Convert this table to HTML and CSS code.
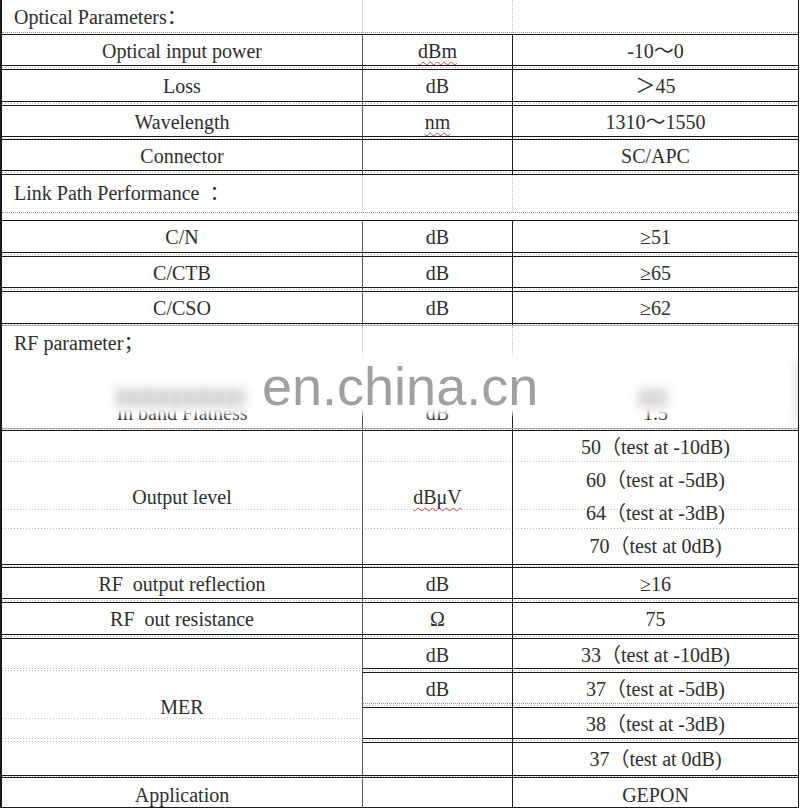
FILE: index.html
```html
<!DOCTYPE html>
<html lang="en">
<head>
<meta charset="utf-8">
<title>Parameters</title>
<link rel="stylesheet" href="styles.css">
</head>
<body>
<div class="sheet">
  <div class="sec s1"><div class="c1 lbl">Optical Parameters：</div><div class="c2"></div><div class="c3"></div></div>
  <div class="row"><div class="c1">Optical input power</div><div class="c2"><span class="sp">dBm</span></div><div class="c3">-10～0</div></div>
  <div class="gap"></div>
  <div class="row t"><div class="c1">Loss</div><div class="c2">dB</div><div class="c3">＞45</div></div>
  <div class="gap"></div>
  <div class="row"><div class="c1">Wavelength</div><div class="c2"><span class="sp">nm</span></div><div class="c3">1310～1550</div></div>
  <div class="gap g2"></div>
  <div class="row"><div class="c1">Connector</div><div class="c2"></div><div class="c3">SC/APC</div></div>
  <div class="gap"></div>
  <div class="sec s2"><div class="c1 lbl">Link Path Performance&nbsp; ：</div><div class="c2"></div><div class="c3"></div></div>
  <div class="row t"><div class="c1">C/N</div><div class="c2">dB</div><div class="c3">≥51</div></div>
  <div class="gap"></div>
  <div class="row"><div class="c1">C/CTB</div><div class="c2">dB</div><div class="c3">≥65</div></div>
  <div class="gap"></div>
  <div class="row t"><div class="c1">C/CSO</div><div class="c2">dB</div><div class="c3">≥62</div></div>
  <div class="gap g1"></div>
  <div class="sec s3"><div class="c1 lbl">RF parameter；</div><div class="c2"></div><div class="c3"></div></div>
  <div class="row inband"><div class="c1">In band Flatness</div><div class="c2">dB</div><div class="c3">1.5</div></div>
  <div class="gap g1"></div>
  <div class="row out">
    <div class="c1 mid">Output level</div>
    <div class="c2 mid"><span class="sp">dBμV</span></div>
    <div class="c3 stack">
      <div>50（test at -10dB)</div>
      <div>60（test at -5dB)</div>
      <div>64（test at -3dB)</div>
      <div>70（test at 0dB)</div>
    </div>
  </div>
  <div class="gap g2"></div>
  <div class="row"><div class="c1">RF&nbsp; output reflection</div><div class="c2">dB</div><div class="c3">≥16</div></div>
  <div class="gap"></div>
  <div class="row t"><div class="c1">RF&nbsp; out resistance</div><div class="c2">Ω</div><div class="c3">75</div></div>
  <div class="gap"></div>
  <div class="row mer">
    <div class="c1 mid">MER</div>
    <div class="subs">
      <div class="sub sa"><div class="c2">dB</div><div class="c3 big">33（test at -10dB)</div></div>
      <div class="sgap"></div>
      <div class="sub sb"><div class="c2">dB</div><div class="c3 big">37（test at -5dB)</div></div>
      <div class="sgap"></div>
      <div class="sub sc"><div class="c2"></div><div class="c3 big">38（test at -3dB)</div></div>
      <div class="sgap"></div>
      <div class="sub sd"><div class="c2"></div><div class="c3 big">37（test at 0dB)</div></div>
    </div>
  </div>
  <div class="gap g1"></div>
  <div class="row app"><div class="c1">Application</div><div class="c2"></div><div class="c3">GEPON</div></div>

  <div class="blur">
    <i class="sm sm1"></i>
    <i class="sm sm2"></i>
    <i class="sm sm3"></i>
  </div>
  <div class="wm">en.china.cn</div>
</div>
</body>
</html>
```
FILE: styles.css
```css
* { box-sizing: border-box; margin: 0; padding: 0; }
html, body { background: #fff; }
body {
  font-family: "Liberation Serif", "Noto Sans CJK SC", serif;
  font-size: 20px;
  color: #2e2e2e;
}

.sheet {
  position: relative;
  width: 799px;
  border-left: 2px solid #1a1a1a;
  border-right: 1px solid #1a1a1a;
  overflow: hidden;
}

.row, .sec {
  display: grid;
  grid-template-columns: 361px 150px 285px;
}

.row {
  height: 32px;
  border-top: 1px solid #1a1a1a;
  border-bottom: 1px solid #1a1a1a;
}
.row.t { height: 33px; }

.row > div {
  text-align: center;
  line-height: 30px;
  padding-top: 1px;
  white-space: nowrap;
}

.c1 { border-right: 1px solid #555; }
.c2 { border-right: 1px solid #1a1a1a; }

/* section header rows */
.sec .c1, .sec .c2 { border-right: 1px dotted #b5b5b5; }
.sec .lbl {
  text-align: left;
  padding-left: 12px;
  white-space: nowrap;
}
.s1 {
  height: 33px;
  border-bottom: 1px dotted #999;
  margin-bottom: 1px;
}
.s1 .lbl { line-height: 32px; padding-top: 1px; }
.s2 {
  height: 39px;
  border-top: 1px solid #1a1a1a;
  border-bottom: 1px dotted #999;
  margin-bottom: 7px;
}
.s2 .lbl { line-height: 37px; }
.s3 {
  height: 61px;
  border-top: 1px solid #b0b0b0;
}
.s3 .lbl { line-height: 32px; padding-top: 1px; }

/* gaps between bordered rows */
.gap {
  height: 3px;
  background:
    linear-gradient(#555, #555) 360px 0 / 1px 100% no-repeat,
    linear-gradient(#1a1a1a, #1a1a1a) 510px 0 / 1px 100% no-repeat,
    repeating-linear-gradient(90deg, #b8b8b8 0 1px, transparent 1px 3px) 0 1px / 100% 1px no-repeat;
}
.gap.g2 { height: 2px; }
.gap.g1 { height: 1px; background-position: 360px 0, 510px 0, 0 0; }

/* blurred "in band" row */
.row.inband {
  height: 43px;
  border-top: 0;
  border-bottom: 1px solid #a8a8a8;
}
.row.inband > div { line-height: 30px; padding-top: 12px; }

/* output level block */
.row.out {
  height: 135px;
  background:
    repeating-linear-gradient(90deg, #bdbdbd 0 1px, transparent 1px 3px) 0 30px / 100% 1px no-repeat,
    repeating-linear-gradient(90deg, #bdbdbd 0 1px, transparent 1px 3px) 0 78px / 100% 1px no-repeat,
    repeating-linear-gradient(90deg, #bdbdbd 0 1px, transparent 1px 3px) 0 97px / 100% 1px no-repeat;
}
.row > .mid { padding-top: 0; line-height: 133px; }
.row.out .mid { line-height: 133px; }
.row > .stack { padding-top: 0; line-height: 33px; font-size: 20px; }
.stack > div { height: 33px; }

/* MER block */
.row.mer { height: 138px; }
.row.mer > .mid {
  line-height: 136px;
  background:
    repeating-linear-gradient(90deg, #bdbdbd 0 1px, transparent 1px 3px) 0 29px / 100% 1px no-repeat,
    repeating-linear-gradient(90deg, #bdbdbd 0 1px, transparent 1px 3px) 0 31px / 100% 1px no-repeat,
    repeating-linear-gradient(90deg, #bdbdbd 0 1px, transparent 1px 3px) 0 79px / 100% 1px no-repeat,
    repeating-linear-gradient(90deg, #bdbdbd 0 1px, transparent 1px 3px) 0 99px / 100% 1px no-repeat,
    repeating-linear-gradient(90deg, #bdbdbd 0 1px, transparent 1px 3px) 0 102px / 100% 1px no-repeat;
}
.row > .subs {
  grid-column: 2 / 4;
  display: flex;
  flex-direction: column;
  padding-top: 0;
  line-height: normal;
}
.sub {
  display: grid;
  grid-template-columns: 150px 285px;
}
.sub > div {
  text-align: center;
  line-height: 33px;
  white-space: nowrap;
}
.sub .big { font-size: 20px; }
.sa { height: 30px; border-bottom: 1px solid #1a1a1a; }
.sb { height: 32px; border-top: 1px solid #1a1a1a; border-bottom: 1px dotted #999; }
.sc { height: 32px; border-top: 1px solid #1a1a1a; border-bottom: 1px solid #1a1a1a; }
.sd { height: 33px; border-top: 1px solid #1a1a1a; }
.sgap {
  height: 3px;
  background:
    linear-gradient(#1a1a1a, #1a1a1a) 149px 0 / 1px 100% no-repeat,
    repeating-linear-gradient(90deg, #b8b8b8 0 1px, transparent 1px 3px) 0 1px / 100% 1px no-repeat;
}

.row.app { height: 31px; }
.row.app > div { padding-top: 2px; }

/* spell-check underline */
.sp {
  text-decoration: underline wavy #cc4444;
  text-decoration-thickness: 1px;
  text-underline-offset: 3px;
  text-decoration-skip-ink: none;
}

/* watermark overlay */
.blur {
  position: absolute;
  left: 106px;
  top: 360px;
  width: 700px;
  height: 49px;
  background: #fff;
  box-shadow: 0 0 6px 5px #fff;
}
.sm {
  position: absolute;
  display: block;
  filter: blur(5px);
  border-radius: 3px;
}
.sm1 {
  left: 8px; top: 28px; width: 130px; height: 20px;
  background: repeating-linear-gradient(90deg, #d0d0d0 0 8px, #e6e6e6 8px 14px);
}
.sm2 {
  left: 530px; top: 28px; width: 30px; height: 20px;
  background: #dadada;
}
.sm3 {
  left: 688px; top: 0; width: 5px; height: 60px;
  background: #cfcfcf;
}
.wm {
  position: absolute;
  left: 260px;
  top: 359px;
  font-family: "Liberation Sans", Arial, sans-serif;
  font-size: 54px;
  line-height: 54px;
  color: #a0a0a0;
  white-space: nowrap;
}
```
